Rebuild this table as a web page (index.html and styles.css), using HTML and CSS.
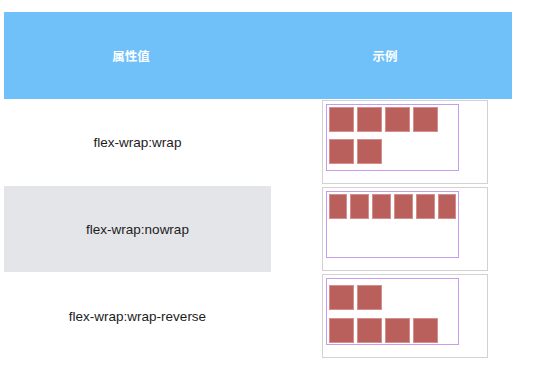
FILE: index.html
```html
<!DOCTYPE html>
<html lang="zh">
<head>
<meta charset="utf-8">
<link rel="stylesheet" href="styles.css">
</head>
<body>
<div class="table">
  <div class="head">
    <div class="hcell">属性值</div>
    <div class="hcell">示例</div>
  </div>
  <div class="row">
    <div class="label">flex-wrap:wrap</div>
    <div class="demo-cell">
      <div class="frame">
        <div class="flex wrap">
          <span class="item"></span><span class="item"></span><span class="item"></span>
          <span class="item"></span><span class="item"></span><span class="item"></span>
        </div>
      </div>
    </div>
  </div>
  <div class="row">
    <div class="label gray">flex-wrap:nowrap</div>
    <div class="demo-cell">
      <div class="frame">
        <div class="flex nowrap">
          <span class="item"></span><span class="item"></span><span class="item"></span>
          <span class="item"></span><span class="item"></span><span class="item"></span>
        </div>
      </div>
    </div>
  </div>
  <div class="row">
    <div class="label">flex-wrap:wrap-reverse</div>
    <div class="demo-cell">
      <div class="frame">
        <div class="flex wrap-reverse">
          <span class="item"></span><span class="item"></span><span class="item"></span>
          <span class="item"></span><span class="item"></span><span class="item"></span>
        </div>
      </div>
    </div>
  </div>
</div>
</body>
</html>
```
FILE: styles.css
```css
html, body {
  margin: 0;
  padding: 0;
  background: #ffffff;
}
body {
  font-family: "Liberation Sans", Arial, "Noto Sans CJK SC", sans-serif;
  color: #1a1a1a;
}
.table {
  width: 508px;
  margin-left: 4px;
  padding-top: 12px;
}
.head {
  display: flex;
  height: 87px;
  background: #70c1f9;
}
.hcell {
  flex: 1 1 0;
  display: flex;
  align-items: center;
  justify-content: center;
  color: #ffffff;
  font-family: "Noto Sans CJK SC", sans-serif;
  font-weight: 700;
  font-size: 12.5px;
}
.row {
  display: flex;
  height: 87px;
}
.label {
  width: 267px;
  display: flex;
  align-items: center;
  justify-content: center;
  font-size: 13.5px;
  color: #1c1c1c;
}
.label.gray {
  background: #e4e5e9;
  height: 86px;
}
.demo-cell {
  flex: 1;
  padding-top: 1px;
  padding-left: 51px;
}
.frame {
  width: 166px;
  height: 84px;
  box-sizing: border-box;
  border: 1px solid #d2d2d2;
  padding: 3px;
}
.flex {
  display: flex;
  width: 133px;
  height: 67px;
  box-sizing: border-box;
  border: 1px solid #c79bee;
}
.wrap { flex-wrap: wrap; }
.nowrap { flex-wrap: nowrap; }
.wrap-reverse { flex-wrap: wrap-reverse; }
.item {
  width: 25px;
  height: 25px;
  margin: 1.5px;
  box-sizing: border-box;
  background: #b9605c;
  border: 1px solid #d58e8b;
}
```
